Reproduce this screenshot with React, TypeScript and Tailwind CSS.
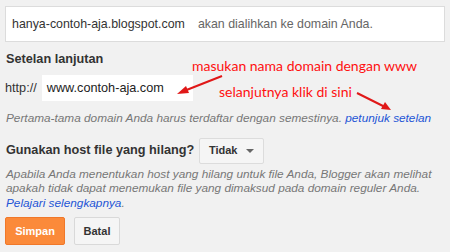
export default function App() {
  return (
    <div className="relative w-[450px] h-[252px] overflow-hidden bg-[#f1f1f1] text-[#222] font-['Liberation_Sans',Arial,sans-serif]">
      <div className="px-[5px] pt-[6px]">
        {/* current address box */}
        <div className="flex h-[36px] items-center border border-[#dcdcdc] bg-white pl-[6px] text-[12.4px]">
          <span className="text-[#333]">hanya-contoh-aja.blogspot.com</span>
          <span className="ml-[13px] text-[#666]">akan dialihkan ke domain Anda.</span>
        </div>

        <h3 className="mt-[8px] text-[12.7px] font-bold text-[#333] pl-px">Setelan lanjutan</h3>

        <div className="mt-[6px] flex items-center">
          <span className="text-[12.7px] text-[#333]">http://</span>
          <div className="ml-[5px] flex h-[26px] w-[151px] items-center bg-white pl-[5px] text-[12.7px] text-[#222]">
            www.contoh-aja.com
          </div>
        </div>

        <p className="mt-[9px] text-[11.8px] italic text-[#777] pl-px">
          Pertama-tama domain Anda harus terdaftar dengan semestinya.{" "}
          <span className="text-[#2455d6]">petunjuk setelan</span>
        </p>

        <div className="mt-[10px] flex items-center">
          <span className="text-[12.7px] font-bold text-[#333] pl-px">Gunakan host file yang hilang?</span>
          <button className="ml-[5px] flex h-[26px] w-[65px] items-center justify-center gap-[9px] rounded-[2px] border border-[#dcdcdc] bg-[#f5f5f5] text-[11px] font-bold text-[#333]">
            Tidak
            <span className="h-0 w-0 border-x-[4px] border-t-[4px] border-x-transparent border-t-[#666]" />
          </button>
        </div>

        <p className="mt-[3px] text-[11.8px] leading-[14.5px] italic text-[#777] pl-px">
          Apabila Anda menentukan host yang hilang untuk file Anda, Blogger akan melihat apakah tidak dapat menemukan file yang dimaksud pada domain reguler Anda.{" "}
          <span className="text-[#2455d6]">Pelajari selengkapnya</span>.
        </p>

        <div className="mt-[7px] flex gap-[9px]">
          <button className="h-[28px] w-[60px] rounded-[2px] border border-[#f0782a] bg-[#fb8a3a] text-[11px] font-bold text-white">
            Simpan
          </button>
          <button className="h-[28px] w-[46px] rounded-[2px] border border-[#d9d9d9] bg-[#f5f5f5] text-[11px] font-bold text-[#333]">
            Batal
          </button>
        </div>
      </div>

      {/* red annotations */}
      <div className="absolute left-[192px] top-[57px] text-[14px] leading-[17px] text-[#ff1010] font-['Lato',sans-serif]">
        masukan nama domain dengan www
      </div>
      <div className="absolute left-[219px] top-[83px] text-[14px] leading-[17px] text-[#ff1010] font-['Lato',sans-serif]">
        selanjutnya klik di sini
      </div>
      <svg className="absolute left-0 top-0" width="450" height="252" viewBox="0 0 450 252">
        <line x1="222" y1="76" x2="184" y2="91" stroke="#e01818" strokeWidth="2" />
        <polygon points="177,94 186,86 189,93" fill="#e01818" />
        <line x1="357" y1="93" x2="385" y2="107" stroke="#e01818" strokeWidth="2" />
        <polygon points="391,110 381,109 385,102" fill="#e01818" />
      </svg>
    </div>
  );
}
